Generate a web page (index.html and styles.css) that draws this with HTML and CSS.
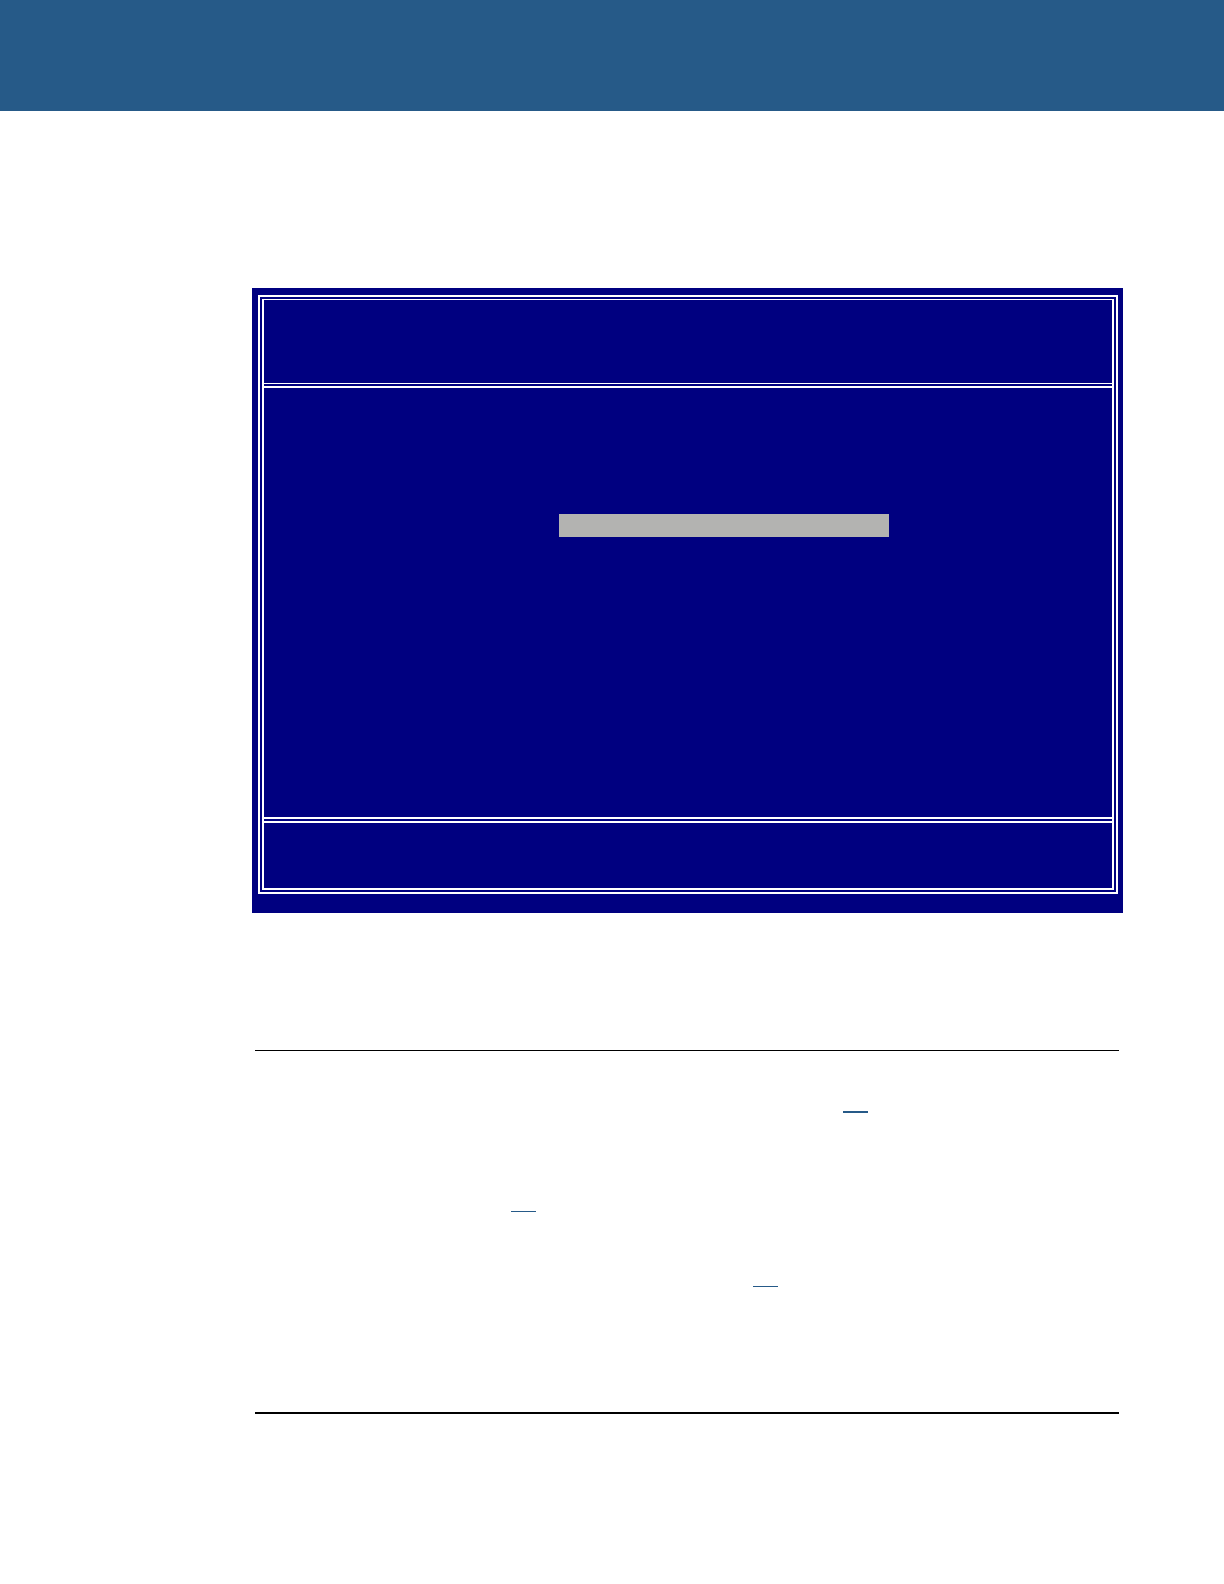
FILE: index.html
```
<!DOCTYPE html>
<html lang="en">
<head>
<meta charset="utf-8">
<meta name="viewport" content="width=device-width, initial-scale=1">
<title>Manual page</title>
<link rel="stylesheet" href="styles.css">
</head>
<body>
<header class="banner"></header>
<main class="page">
  <section class="screen">
    <div class="frame">
      <div class="frame-inner">
        <div class="screen-head"></div>
        <div class="screen-body"><div class="selection"></div></div>
        <div class="screen-foot"></div>
      </div>
    </div>
  </section>
  <section class="notes">
    <p class="note note-first"><a class="ref ref-bold" href="#ref-1" aria-label="Reference 1"></a></p>
    <p class="note note-second"><a class="ref" href="#ref-2" aria-label="Reference 2"></a></p>
    <p class="note note-third"><a class="ref" href="#ref-3" aria-label="Reference 3"></a></p>
  </section>
</main>
</body>
</html>
```
FILE: styles.css
```
* { box-sizing: border-box; }

body {
  margin: 0;
  min-height: 100vh;
  background: #fff;
  font-family: "Liberation Sans", Arial, sans-serif;
}

.banner {
  height: 111px;
  background: #265a88;
}

.page { padding: 177px 101px 170px 252px; }

/* Setup screen with a double-line frame */
.screen {
  padding: 7px 5px 19px 6px;
  background: #000080;
}

.frame {
  padding: 2px;
  border: 2px solid #fff;
}

.frame-inner {
  border: 2px solid #fff;
  border-top-width: 1px;
}

.screen-head {
  height: 84px;
  border-bottom: 1px solid #fff;
}

.screen-body {
  height: 433px;
  margin-top: 2px;
  padding: 126px 223px 0 295px;
  border-top: 2px solid #fff;
  border-bottom: 2px solid #fff;
}

.selection {
  height: 23px;
  background: #b3b3b1;
}

.screen-foot {
  height: 67px;
  margin-top: 2px;
  border-top: 2px solid #fff;
}

/* Ruled block with page references */
.notes {
  margin: 137px 4px 0 3px;
  padding-top: 60px;
  border-top: 1px solid #000;
  border-bottom: 2px solid #000;
}

.note {
  display: flex;
  margin: 0;
}

.note-first { padding: 0 0 98px 588px; }
.note-second { padding: 0 0 74px 256px; }
.note-third { padding: 0 0 125px 498px; }

.ref {
  width: 25px;
  border-bottom: 1px solid #265a88;
}

.ref-bold { border-bottom: 2px solid #265a88; }
```
